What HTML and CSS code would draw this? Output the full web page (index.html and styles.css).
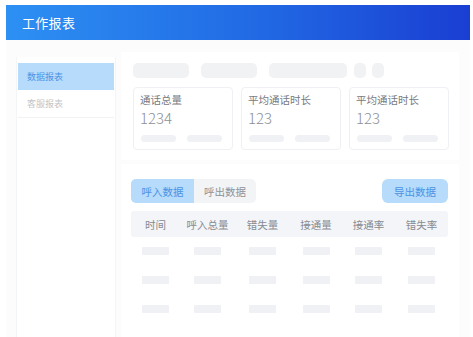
FILE: index.html
```html
<!DOCTYPE html>
<html lang="zh-CN">
<head>
<meta charset="utf-8">
<title>工作报表</title>
<link rel="stylesheet" href="styles.css">
</head>
<body>
<div class="app">
  <header class="header"><span class="title">工作报表</span></header>
  <div class="layout">
    <aside class="sidebar">
      <div class="menu-item active">数据报表</div>
      <div class="menu-item">客服报表</div>
    </aside>
    <main class="main">
      <section class="panel top">
        <div class="filters">
          <span class="sk sk-a"></span>
          <span class="sk sk-b"></span>
          <span class="sk sk-c"></span>
          <span class="sk sk-d"></span>
          <span class="sk sk-d"></span>
        </div>
        <div class="cards">
          <div class="card">
            <div class="card-title">通话总量</div>
            <div class="card-num">1234</div>
            <div class="pills"><span class="pill"></span><span class="pill"></span></div>
          </div>
          <div class="card">
            <div class="card-title">平均通话时长</div>
            <div class="card-num">123</div>
            <div class="pills"><span class="pill"></span><span class="pill"></span></div>
          </div>
          <div class="card">
            <div class="card-title">平均通话时长</div>
            <div class="card-num">123</div>
            <div class="pills"><span class="pill"></span><span class="pill"></span></div>
          </div>
        </div>
      </section>
      <section class="panel bottom">
        <div class="toolbar">
          <div class="tabs">
            <span class="tab active">呼入数据</span>
            <span class="tab">呼出数据</span>
          </div>
          <span class="export">导出数据</span>
        </div>
        <div class="table">
          <div class="thead">
            <span>时间</span><span>呼入总量</span><span>错失量</span><span>接通量</span><span>接通率</span><span>错失率</span>
          </div>
          <div class="row"><i></i><i></i><i></i><i></i><i></i><i></i></div>
          <div class="row"><i></i><i></i><i></i><i></i><i></i><i></i></div>
          <div class="row"><i></i><i></i><i></i><i></i><i></i><i></i></div>
        </div>
      </section>
    </main>
  </div>
</div>
</body>
</html>
```
FILE: styles.css
```css
* { box-sizing: border-box; margin: 0; padding: 0; }
html, body { background: #ffffff; }
body {
  font-family: "Noto Sans CJK SC", "Noto Sans", sans-serif;
  width: 473px;
  height: 337px;
  overflow: hidden;
}
.app { padding: 5px 3px 0 6px; }
.header {
  height: 35px;
  background: linear-gradient(90deg, #2d90f3 0%, #2169e4 55%, #1a3ed2 100%);
  display: flex;
  align-items: center;
  padding-left: 16px;
}
.title { color: #ffffff; font-size: 13px; letter-spacing: 0.3px; }
.layout {
  display: flex;
  background: #fcfcfd;
  height: 302px;
  padding: 12px 0 0 10px;
  gap: 5px;
}
.sidebar {
  width: 100px;
  background: #ffffff;
  margin-top: 5px;
  padding: 6px 1px 0;
  border-left: 1px solid #f4f5f7;
  border-right: 1px solid #f4f5f7;
}
.menu-item {
  height: 27px;
  display: flex;
  align-items: center;
  padding-left: 9px;
  font-size: 9px;
  color: #c3c5c9;
}
.menu-item.active { background: #b6dbfb; color: #4b94e6; }
.menu-item + .menu-item { height: 28px; border-bottom: 1px solid #f1f2f4; }
.main { width: 338px; display: flex; flex-direction: column; gap: 4px; }
.panel { background: #ffffff; }
.panel.top { padding: 11px 10px 10px 12px; height: 108px; }
.filters { display: flex; gap: 12px; height: 15px; }
.sk { background: #f1f2f4; border-radius: 5px; display: block; }
.sk-a, .sk-b { width: 56px; }
.sk-c { width: 78px; margin-right: -5px; }
.sk-d { width: 12px; margin-right: -6px; }
.cards { display: flex; gap: 8px; margin-top: 9px; }
.card {
  width: 100px;
  height: 63px;
  border: 1px solid #eef0f3;
  border-radius: 4px;
  padding: 5px 6px 0;
}
.card-title { font-size: 10.5px; line-height: 14px; color: #777b82; }
.card-num { font-size: 15px; line-height: 18px; margin-top: 2px; color: #8c9097; font-weight: 300; }
.pills { display: flex; gap: 11px; margin-top: 8px; padding-left: 1px; }
.pill { width: 35px; height: 7px; border-radius: 4px; background: #eff1f4; }
.panel.bottom { flex: 1; padding: 15px 11px 0 10px; }
.toolbar { display: flex; justify-content: space-between; align-items: center; }
.tabs { display: flex; border-radius: 5px; overflow: hidden; background: #f3f4f6; }
.tab {
  height: 24px;
  width: 62px;
  display: flex;
  align-items: center;
  justify-content: center;
  font-size: 10.5px;
  color: #8e9299;
}
.tab.active { background: #b6dbfb; color: #4a93e5; width: 63px; }
.export {
  width: 66px;
  height: 24px;
  border-radius: 6px;
  background: #b6dbfb;
  color: #4a93e5;
  font-size: 10.5px;
  display: flex;
  align-items: center;
  justify-content: center;
}
.table { margin-top: 8px; width: 317px; }
.thead, .row {
  display: grid;
  grid-template-columns: 49px 55px 55px 52px 53px 53px;
  justify-items: center;
  align-items: center;
}
.thead {
  height: 26px;
  background: #f3f5f8;
  border-radius: 3px;
  font-size: 10.5px;
  color: #878b92;
}
.row { height: 29px; }
.row i { display: block; width: 27px; height: 8px; background: #f0f1f4; border-radius: 1px; }
.thead + .row { margin-top: -1px; }
```
